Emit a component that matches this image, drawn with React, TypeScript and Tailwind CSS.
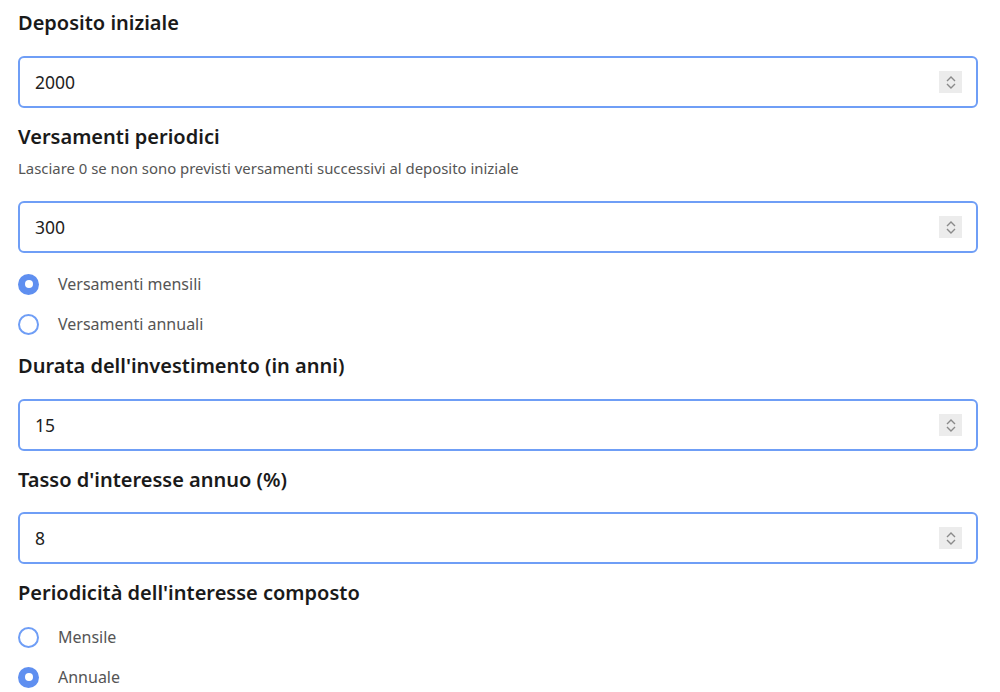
import React from 'react';

const Spinner = () => (
  <div className="w-[23px] h-[22px] bg-[#ececec] flex flex-col items-center justify-center gap-[1px]">
    <svg width="10" height="6" viewBox="0 0 10 6" fill="none">
      <path d="M1 5 L5 1 L9 5" stroke="#8a8a8a" strokeWidth="1.4" />
    </svg>
    <svg width="10" height="6" viewBox="0 0 10 6" fill="none">
      <path d="M1 1 L5 5 L9 1" stroke="#8a8a8a" strokeWidth="1.4" />
    </svg>
  </div>
);

const NumberField = ({ value, className = '' }: { value: string; className?: string }) => (
  <div
    className={`h-[52px] w-[960px] border-2 border-[#6f9ef6] rounded-[6px] bg-white flex items-center justify-between pl-[15px] pr-[14px] ${className}`}
  >
    <span className="text-[17.5px] text-[#222]">{value}</span>
    <Spinner />
  </div>
);

const Heading = ({ children, className = '' }: { children: React.ReactNode; className?: string }) => (
  <h2 className={`text-[20px] leading-[28px] font-semibold text-[#1a1a1a] ${className}`}>{children}</h2>
);

const Radio = ({ label, checked, className = '' }: { label: string; checked?: boolean; className?: string }) => (
  <label className={`flex items-center h-[24px] ${className}`}>
    {checked ? (
      <span className="w-[21px] h-[21px] rounded-full bg-[#5f8ff0] flex items-center justify-center">
        <span className="w-[8px] h-[8px] rounded-full bg-white" />
      </span>
    ) : (
      <span className="w-[21px] h-[21px] rounded-full border-2 border-[#6f9ef6] bg-white" />
    )}
    <span className="ml-[19px] text-[16px] text-[#555]">{label}</span>
  </label>
);

export default function App() {
  return (
    <div className="w-[1000px] h-[692px] bg-white overflow-hidden pl-[18px] pt-[9px] font-['Noto_Sans','Open_Sans',sans-serif]">
      {/* Deposito */}
      <Heading>Deposito iniziale</Heading>
      <NumberField value="2000" className="mt-[19px]" />

      {/* Versamenti */}
      <Heading className="mt-[15px]">Versamenti periodici</Heading>
      <p className="mt-[7px] text-[14.9px] leading-[20px] text-[#555]">
        Lasciare 0 se non sono previsti versamenti successivi al deposito iniziale
      </p>
      <NumberField value="300" className="mt-[23px]" />
      <Radio label="Versamenti mensili" checked className="mt-[19px]" />
      <Radio label="Versamenti annuali" className="mt-[16px]" />

      {/* Durata */}
      <Heading className="mt-[16px]">Durata dell'investimento (in anni)</Heading>
      <NumberField value="15" className="mt-[19px]" />

      {/* Tasso */}
      <Heading className="mt-[15px]">Tasso d'interesse annuo (%)</Heading>
      <NumberField value="8" className="mt-[18px]" />

      {/* Periodicità */}
      <Heading className="mt-[15px]">Periodicità dell'interesse composto</Heading>
      <Radio label="Mensile" className="mt-[18px]" />
      <Radio label="Annuale" checked className="mt-[16px]" />
    </div>
  );
}
